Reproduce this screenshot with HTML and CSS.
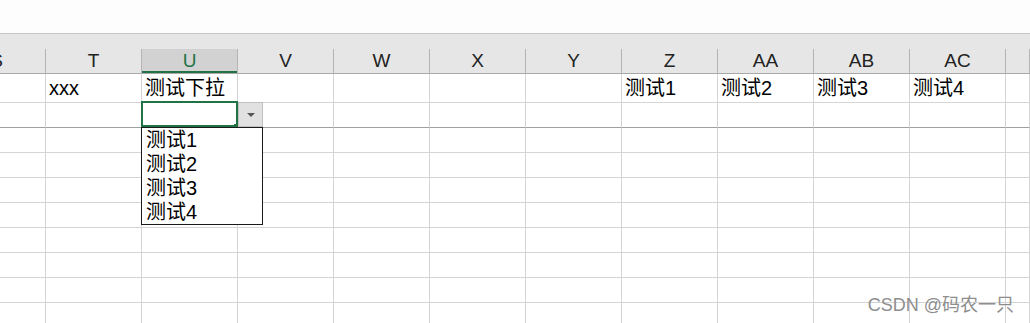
FILE: index.html
```html
<!DOCTYPE html>
<html lang="zh-CN">
<head>
    <meta charset="UTF-8">
    <meta name="viewport" content="width=device-width, initial-scale=1.0">
    <title>测试下拉</title>
    <link rel="stylesheet" href="styles.css">
</head>
<body>
    <div class="toolbar"></div>

    <div class="heads">
        <div class="row hd">
            <div class="cell first"><span>S</span></div>
            <div class="cell">T</div>
            <div class="cell active">U</div>
            <div class="cell">V</div>
            <div class="cell">W</div>
            <div class="cell">X</div>
            <div class="cell">Y</div>
            <div class="cell">Z</div>
            <div class="cell">AA</div>
            <div class="cell">AB</div>
            <div class="cell">AC</div>
            <div class="cell"></div>
        </div>
    </div>

    <div class="row r1">
        <div class="cell"></div>
        <div class="cell">xxx</div>
        <div class="cell">测试下拉</div>
        <div class="cell"></div>
        <div class="cell"></div>
        <div class="cell"></div>
        <div class="cell"></div>
        <div class="cell">测试1</div>
        <div class="cell">测试2</div>
        <div class="cell">测试3</div>
        <div class="cell">测试4</div>
        <div class="cell"></div>
    </div>

    <div class="row r2">
        <div class="cell"></div>
        <div class="cell"></div>
        <div class="cell selected">
            <div class="sel"></div>
            <div class="handle"></div>
            <div class="dd-btn"><span class="arrow"></span></div>
            <ul class="dd-list">
                <li>测试1</li>
                <li>测试2</li>
                <li>测试3</li>
                <li>测试4</li>
            </ul>
        </div>
        <div class="cell"></div>
        <div class="cell"></div>
        <div class="cell"></div>
        <div class="cell"></div>
        <div class="cell"></div>
        <div class="cell"></div>
        <div class="cell"></div>
        <div class="cell"></div>
        <div class="cell"></div>
    </div>

    <div class="row"><div class="cell"></div><div class="cell"></div><div class="cell"></div><div class="cell"></div><div class="cell"></div><div class="cell"></div><div class="cell"></div><div class="cell"></div><div class="cell"></div><div class="cell"></div><div class="cell"></div><div class="cell"></div></div>
    <div class="row"><div class="cell"></div><div class="cell"></div><div class="cell"></div><div class="cell"></div><div class="cell"></div><div class="cell"></div><div class="cell"></div><div class="cell"></div><div class="cell"></div><div class="cell"></div><div class="cell"></div><div class="cell"></div></div>
    <div class="row"><div class="cell"></div><div class="cell"></div><div class="cell"></div><div class="cell"></div><div class="cell"></div><div class="cell"></div><div class="cell"></div><div class="cell"></div><div class="cell"></div><div class="cell"></div><div class="cell"></div><div class="cell"></div></div>
    <div class="row"><div class="cell"></div><div class="cell"></div><div class="cell"></div><div class="cell"></div><div class="cell"></div><div class="cell"></div><div class="cell"></div><div class="cell"></div><div class="cell"></div><div class="cell"></div><div class="cell"></div><div class="cell"></div></div>
    <div class="row"><div class="cell"></div><div class="cell"></div><div class="cell"></div><div class="cell"></div><div class="cell"></div><div class="cell"></div><div class="cell"></div><div class="cell"></div><div class="cell"></div><div class="cell"></div><div class="cell"></div><div class="cell"></div></div>
    <div class="row"><div class="cell"></div><div class="cell"></div><div class="cell"></div><div class="cell"></div><div class="cell"></div><div class="cell"></div><div class="cell"></div><div class="cell"></div><div class="cell"></div><div class="cell"></div><div class="cell"></div><div class="cell"></div></div>
    <div class="row"><div class="cell"></div><div class="cell"></div><div class="cell"></div><div class="cell"></div><div class="cell"></div><div class="cell"></div><div class="cell"></div><div class="cell"></div><div class="cell"></div><div class="cell"></div><div class="cell"></div><div class="cell"></div></div>
    <div class="row"><div class="cell"></div><div class="cell"></div><div class="cell"></div><div class="cell"></div><div class="cell"></div><div class="cell"></div><div class="cell"></div><div class="cell"></div><div class="cell"></div><div class="cell"></div><div class="cell"></div><div class="cell"></div></div>

    <div class="watermark">CSDN @码农一只</div>
</body>
</html>
```

FILE: styles.css
```css
body {
    margin: 0;
    height: 323px;
    overflow: hidden;
    background: #fff;
    color: #000;
    font-family: "Liberation Sans", "Noto Sans CJK SC", sans-serif;
}
.toolbar {
    height: 33px;
    background: #fdfdfd;
    border-bottom: 1px solid #c6c6c6;
}
.heads {
    background: #e6e6e6;
    padding-top: 15px;
}
.row {
    display: grid;
    grid-template-columns: 46px repeat(10, 96px) 24px;
}
.cell {
    box-sizing: border-box;
    height: 25px;
    border-right: 1px solid #d4d4d4;
    border-bottom: 1px solid #d4d4d4;
    padding-left: 3px;
    font-size: 20px;
    line-height: 24px;
    white-space: nowrap;
}
.hd .cell {
    padding-left: 0;
    text-align: center;
    font-size: 19px;
    line-height: 24px;
    color: #222;
    border-right-color: #b4b4b4;
    border-bottom-color: #a8a8a8;
}
.hd .first {
    display: flex;
    justify-content: flex-end;
    padding-right: 42px;
    overflow: hidden;
}
.hd .active {
    background: #d2d2d2;
    color: #217346;
    box-shadow: inset 0 -2px 0 #217346;
}
.r1 .cell {
    height: 29px;
    line-height: 28px;
}
.r2 .cell {
    border-bottom-color: #a0a0a0;
}
.selected {
    position: relative;
}
.sel {
    position: absolute;
    left: -1px;
    top: -2px;
    width: 97px;
    height: 26px;
    box-sizing: border-box;
    border: 2px solid #217346;
}
.handle {
    position: absolute;
    left: 92px;
    top: 21px;
    width: 4px;
    height: 4px;
    background: #217346;
}
.dd-btn {
    position: absolute;
    left: 96px;
    top: -1px;
    width: 25px;
    height: 25px;
    box-sizing: border-box;
    background: #e1e1e1;
    border: 1px solid #c0c0c0;
    display: flex;
    align-items: center;
    justify-content: center;
}
.arrow {
    width: 0;
    height: 0;
    border-left: 4px solid transparent;
    border-right: 4px solid transparent;
    border-top: 4px solid #555;
}
.dd-list {
    position: absolute;
    left: -1px;
    top: 24px;
    width: 122px;
    box-sizing: border-box;
    margin: 0;
    padding: 0;
    list-style: none;
    background: #fff;
    border: 1px solid #1a1a1a;
}
.dd-list li {
    height: 24px;
    line-height: 24px;
    padding-left: 4px;
    font-size: 20px;
}
.watermark {
    position: absolute;
    right: 16px;
    top: 296px;
    font-size: 18px;
    line-height: 18px;
    color: #8e8e8e;
}
```
